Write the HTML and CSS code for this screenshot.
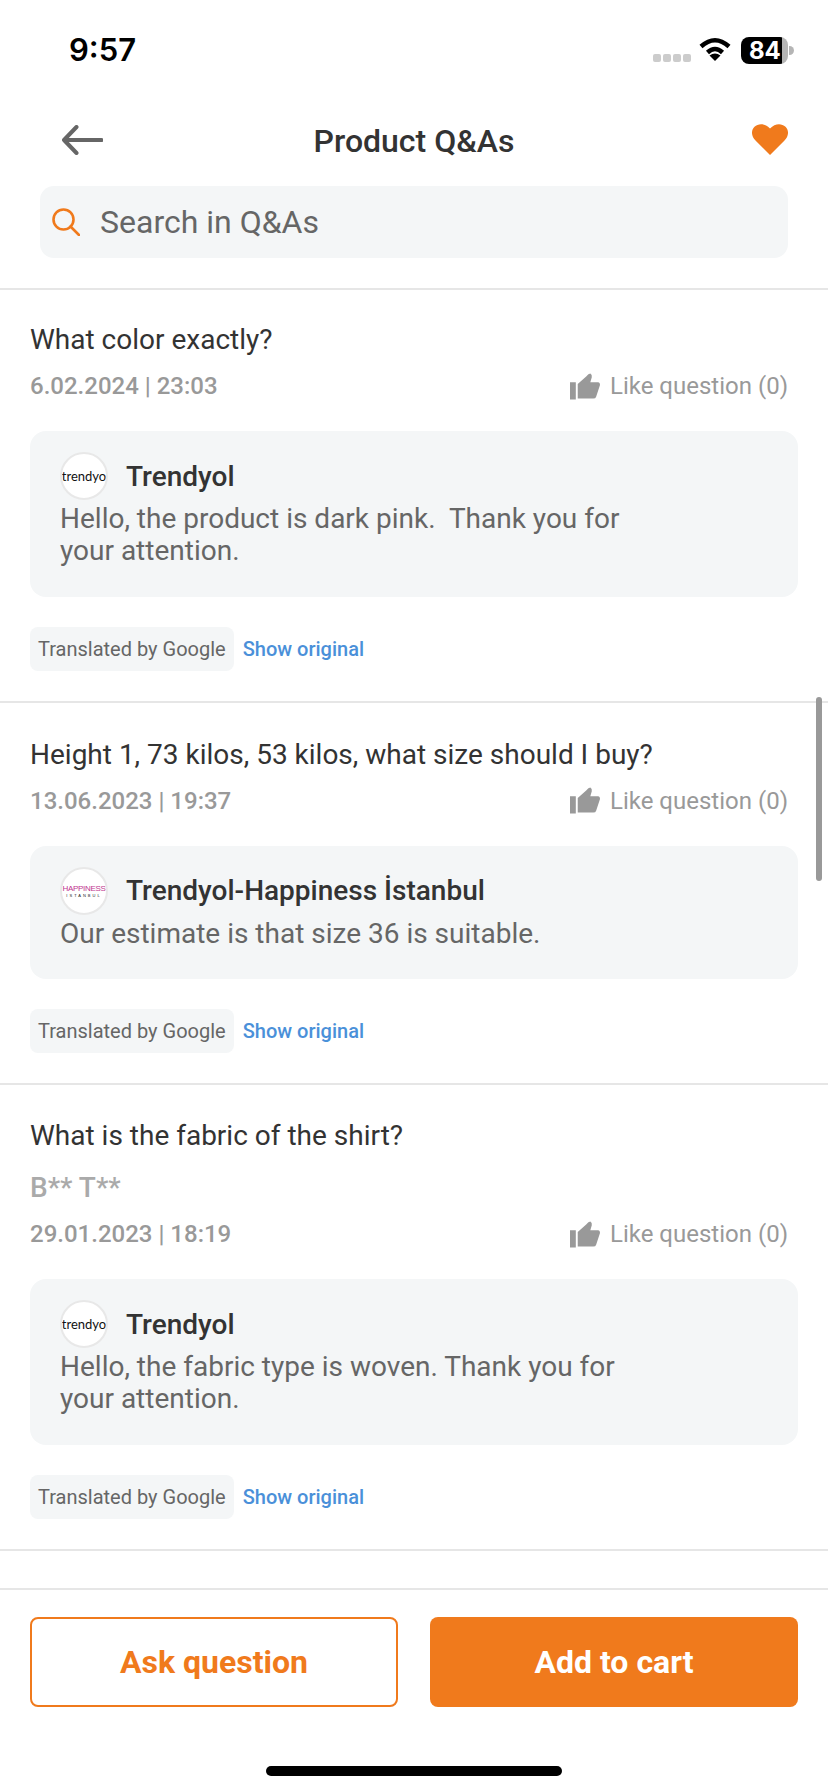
FILE: index.html
```html
<!DOCTYPE html>
<html lang="en">
<head>
<meta charset="utf-8">
<title>Product Q&amp;As</title>
<link rel="stylesheet" href="styles.css">
</head>
<body>
<div class="page">
  <div class="status">
    <span class="time">9:57</span>
    <div class="status-right">
      <div class="dots"><i></i><i></i><i></i><i></i></div>
      <svg class="wifi" viewBox="0 0 32 24"><path d="M2 9.500Q16 -3 30 9.500" /><path d="M8.500 15.500Q16 8.500 23.500 15.500" /><path class="fill" d="M16 24L10.500 18.500Q16 14.500 21.500 18.500Z"/></svg>
      <div class="battery"><span class="level">84</span><span class="rest"></span></div>
      <span class="nub"></span>
    </div>
  </div>

  <header class="nav">
    <svg class="back" viewBox="0 0 41 30"><path d="M14.500 2L2 15L14.500 28M2 15H39.500"/></svg>
    <h1>Product Q&amp;As</h1>
    <svg class="heart" viewBox="0 0 36 31"><path d="M18 31L3.500 16.500C-1 12 -1 6 2.500 2.800C6.500 -1 13 -0.800 18 4.500C23 -0.800 29.500 -1 33.500 2.800C37 6 37 12 32.500 16.500Z"/></svg>
  </header>

  <div class="search">
    <svg class="search-icon" viewBox="0 0 28 28"><circle cx="11.500" cy="11.500" r="10"/><path d="M18.500 18.500L27 27"/></svg>
    <span>Search in Q&amp;As</span>
  </div>

  <main class="list">
    <article class="item item-first">
      <p class="question">What color exactly?</p>
      <div class="meta">
        <span class="date">6.02.2024 | 23:03</span>
        <span class="like"><svg class="thumb" viewBox="0 0 31 27"><path d="M0 9H6V27H0ZM8 11L17 3Q19 0 21 0Q23 1 22.500 4L21 9H29Q31 9 31 12L27 24Q26.500 26 24 26H8Z"/></svg>Like question (0)</span>
      </div>
      <div class="answer">
        <div class="seller">
          <span class="avatar"><span class="logo-trendyol">trendyo</span></span>
          <b>Trendyol</b>
        </div>
        <p class="answer-text">Hello, the product is dark pink.&nbsp; Thank you for your attention.</p>
      </div>
      <div class="translation"><span class="tag">Translated by Google</span><span class="original">Show original</span></div>
    </article>

    <article class="item">
      <p class="question">Height 1, 73 kilos, 53 kilos, what size should I buy?</p>
      <div class="meta">
        <span class="date">13.06.2023 | 19:37</span>
        <span class="like"><svg class="thumb" viewBox="0 0 31 27"><path d="M0 9H6V27H0ZM8 11L17 3Q19 0 21 0Q23 1 22.500 4L21 9H29Q31 9 31 12L27 24Q26.500 26 24 26H8Z"/></svg>Like question (0)</span>
      </div>
      <div class="answer">
        <div class="seller">
          <span class="avatar"><span class="logo-happy">HAPPINESS<small>ISTANBUL</small></span></span>
          <b>Trendyol-Happiness İstanbul</b>
        </div>
        <p class="answer-text">Our estimate is that size 36 is suitable.</p>
      </div>
      <div class="translation"><span class="tag">Translated by Google</span><span class="original">Show original</span></div>
    </article>

    <article class="item item-author">
      <p class="question">What is the fabric of the shirt?</p>
      <p class="author">B** T**</p>
      <div class="meta">
        <span class="date">29.01.2023 | 18:19</span>
        <span class="like"><svg class="thumb" viewBox="0 0 31 27"><path d="M0 9H6V27H0ZM8 11L17 3Q19 0 21 0Q23 1 22.500 4L21 9H29Q31 9 31 12L27 24Q26.500 26 24 26H8Z"/></svg>Like question (0)</span>
      </div>
      <div class="answer">
        <div class="seller">
          <span class="avatar"><span class="logo-trendyol">trendyo</span></span>
          <b>Trendyol</b>
        </div>
        <p class="answer-text">Hello, the fabric type is woven. Thank you for your attention.</p>
      </div>
      <div class="translation"><span class="tag">Translated by Google</span><span class="original">Show original</span></div>
    </article>
    <span class="scrollbar"></span>
  </main>

  <footer class="footer">
    <div class="actions">
      <button class="btn btn-outline">Ask question</button>
      <button class="btn btn-solid">Add to cart</button>
    </div>
    <span class="home"></span>
  </footer>
</div>
</body>
</html>
```
FILE: styles.css
```css
* { box-sizing: border-box; }
html, body { margin: 0; padding: 0; background: #fff; }
body { font-family: Roboto, "Liberation Sans", sans-serif; color: #333; }
p, h1 { margin: 0; }

.page { width: 828px; height: 1792px; display: flex; flex-direction: column; overflow: hidden; background: #fff; }

.status { height: 100px; flex: none; display: flex; justify-content: space-between; align-items: center; padding: 0 34px 0 69px; }
.time { font-family: Inter, "Liberation Sans", sans-serif; font-weight: 600; font-size: 31px; line-height: 36px; color: #000; }
.status-right { display: flex; align-items: center; }
.dots { display: flex; gap: 2px; margin: 15px 8px 0 0; }
.dots i { width: 8px; height: 8px; border-radius: 2px; background: #ccc; }
.wifi { width: 32px; height: 24px; margin: -2px 10px 0 0; fill: none; stroke: #000; stroke-width: 4.500px; }
.wifi .fill { fill: #000; stroke: none; }
.battery { width: 47px; height: 27px; display: flex; border-radius: 8px; overflow: hidden; }
.level { width: 41px; background: #000; color: #fff; font-family: Inter, "Liberation Sans", sans-serif; font-weight: 700; font-size: 24px; line-height: 27px; white-space: nowrap; padding-left: 8px; }
.rest { flex: 1; background: #b5b5b5; }
.nub { width: 5px; height: 9px; margin-left: 1px; background: #b5b5b5; border-radius: 0 5px 5px 0; }

.nav { height: 82px; flex: none; display: grid; grid-template-columns: 1fr auto 1fr; align-items: center; padding: 0 40px; }
.nav h1 { font-size: 32px; font-weight: 500; line-height: 40px; color: #333; }
.back { width: 41px; height: 30px; margin: -2px 0 0 22px; fill: none; stroke: #666; stroke-width: 4px; stroke-linecap: round; stroke-linejoin: round; }
.heart { width: 36px; height: 31px; fill: #f07a1c; justify-self: end; margin-top: -4px; }

.search { height: 72px; flex: none; margin: 4px 40px 30px; padding-left: 12px; display: flex; align-items: center; gap: 20px; background: #f4f6f7; border-radius: 14px; font-size: 32px; color: #666; }
.search-icon { width: 28px; height: 28px; fill: none; stroke: #f07a1c; stroke-width: 2.600px; stroke-linecap: round; }

.list { position: relative; flex: 1; min-height: 0; overflow: hidden; border-top: 2px solid #e6e6e6; }
.item { padding: 34px 30px 30px; border-bottom: 2px solid #e6e6e6; }
.item-first { padding-top: 32px; }
.item-author { padding-top: 33px; }
.question { font-size: 28px; line-height: 36px; color: #333; margin-bottom: 12px; }
.author { font-size: 28px; line-height: 32px; font-weight: 500; color: #aaa; margin: 18px 0 14px; }
.meta { display: flex; justify-content: space-between; align-items: center; height: 32px; padding-right: 10px; }
.date { font-size: 24px; font-weight: 500; color: #999; }
.like { display: flex; align-items: center; gap: 10px; font-size: 24px; color: #999; }
.thumb { width: 30px; height: 27px; fill: #999; }

.answer { margin-top: 29px; padding: 21px 30px 29.500px; background: #f4f6f7; border-radius: 16px; }
.seller { display: flex; align-items: center; gap: 18px; height: 48px; margin-bottom: 3px; }
.seller b { font-size: 28px; font-weight: 500; color: #333; }
.avatar { width: 48px; height: 48px; flex: none; display: flex; align-items: center; justify-content: center; overflow: hidden; border-radius: 50%; background: #fff; border: 2px solid #e8e8e8; }
.logo-trendyol { font-family: Lato, sans-serif; font-size: 13px; color: #111; white-space: nowrap; }
.logo-happy { display: flex; flex-direction: column; align-items: center; font-family: "Liberation Sans", sans-serif; font-size: 8px; line-height: 9px; color: #c0358f; white-space: nowrap; letter-spacing: -.3px; }
.logo-happy small { font-size: 4px; line-height: 5px; color: #222; letter-spacing: 2px; }
.answer-text { max-width: 600px; font-size: 28px; line-height: 32px; color: #666; }

.translation { display: flex; align-items: center; gap: 9px; margin-top: 30px; }
.tag { height: 44px; padding: 0 8px; display: flex; align-items: center; background: #f4f6f7; border-radius: 8px; font-size: 20px; color: #666; }
.original { font-size: 20px; font-weight: 500; color: #4a90d9; }

.scrollbar { position: absolute; right: 6px; top: 407px; width: 6px; height: 184px; border-radius: 3px; background: #999; }

.footer { height: 204px; flex: none; border-top: 2px solid #e6e6e6; display: flex; flex-direction: column; align-items: center; padding: 27px 30px 0; }
.actions { width: 100%; display: grid; grid-template-columns: 368px 368px; justify-content: space-between; }
.btn { height: 90px; border-radius: 8px; font-family: Roboto, sans-serif; font-size: 32px; font-weight: 700; }
.btn-outline { background: #fff; border: 2px solid #f07a1c; color: #f07a1c; }
.btn-solid { background: #f07a1c; border: 0; color: #fff; }
.home { width: 296px; height: 10px; margin-top: 59px; border-radius: 5px; background: #000; }
```
